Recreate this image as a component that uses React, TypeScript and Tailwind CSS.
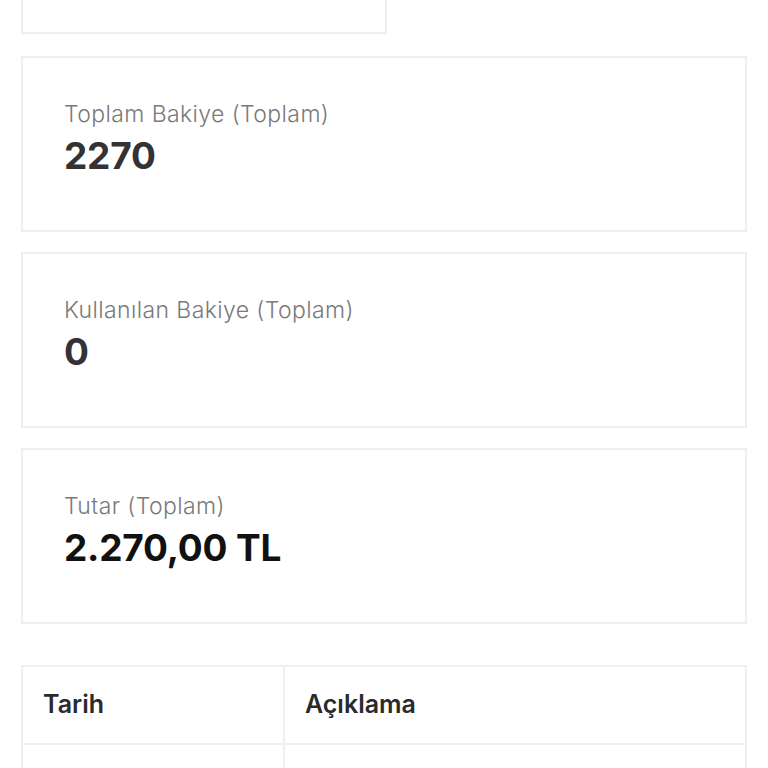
import React from "react";

const font = { fontFamily: "Inter, 'Noto Sans', sans-serif" };

function StatCard({ label, value, dark }: { label: string; value: string; dark?: boolean }) {
  return (
    <div className="h-[176px] border-2 border-[#efefef] bg-white pl-[41px] pt-[40px]">
      <div className="text-[23px] leading-[33px] text-[#7a7a7a] font-light tracking-[0.4px]">{label}</div>
      <div className={`mt-[3px] text-[37px] leading-[44px] font-bold tracking-[-0.2px] ${dark ? "text-[#111111]" : "text-[#333333]"}`}>
        {value}
      </div>
    </div>
  );
}

export default function App() {
  return (
    <div className="w-[768px] h-[768px] overflow-hidden bg-white" style={font}>
      <div className="px-[21px] -mt-[20px] flex flex-col">
        <div className="w-[366px] h-[54px] border-2 border-[#efefef] bg-white" />
        <div className="mt-[22px] flex flex-col gap-[20px]">
          <StatCard label="Toplam Bakiye (Toplam)" value="2270" />
          <StatCard label="Kullanılan Bakiye (Toplam)" value="0" />
          <StatCard label="Tutar (Toplam)" value="2.270,00 TL" dark />
        </div>
        <table className="mt-[41px] w-full border-collapse border-2 border-[#efefef] text-[#2a2a2a]">
          <thead>
            <tr className="h-[78px]">
              <th className="w-[262px] border-2 border-[#efefef] text-left pl-[20px] text-[25px] font-semibold">Tarih</th>
              <th className="border-2 border-[#efefef] text-left pl-[20px] text-[25px] font-semibold">Açıklama</th>
            </tr>
          </thead>
          <tbody>
            <tr className="h-[78px]">
              <td className="border-2 border-[#efefef]"></td>
              <td className="border-2 border-[#efefef]"></td>
            </tr>
          </tbody>
        </table>
      </div>
    </div>
  );
}
